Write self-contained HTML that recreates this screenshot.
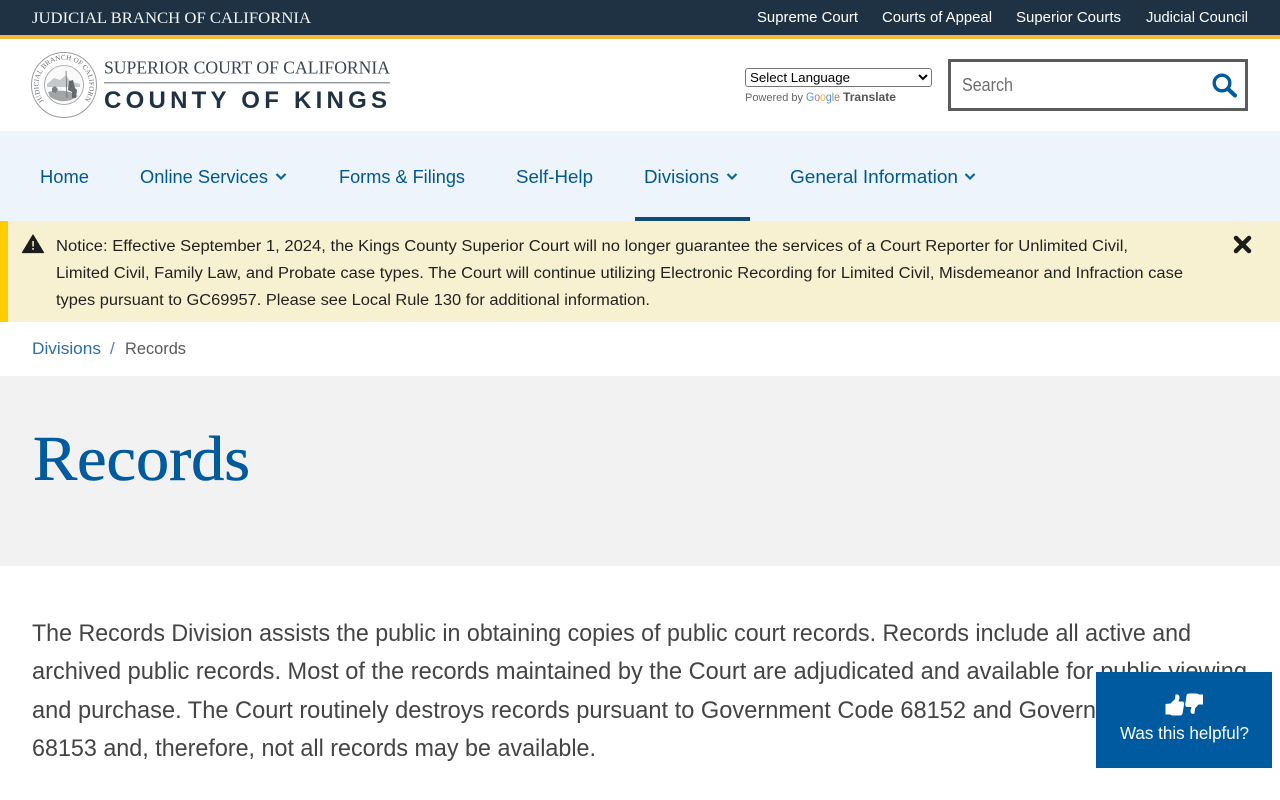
<!DOCTYPE html>
<html lang="en"><head><meta charset="utf-8"><title>Records - Superior Court of California, County of Kings</title>
<style>
html,body{margin:0;padding:0;width:1280px;height:800px;overflow:hidden;background:#fff}
.b{position:absolute}
svg{position:absolute;left:0;top:0}
text{font-family:"Liberation Sans",sans-serif}
.sf{font-family:"Liberation Serif",serif}
select{position:absolute;left:745px;top:68px;width:187px;height:19px;font:13.33px "Liberation Sans",sans-serif;color:#000;background:#fff;border:1px solid #767676;border-radius:3px;padding:0;margin:0}
</style></head><body>
<div class="b" style="left:0;top:0;width:1280px;height:35px;background:#1f3244"></div>
<div class="b" style="left:0;top:35px;width:1280px;height:4px;background:#f0b840"></div>
<div class="b" style="left:0;top:131px;width:1280px;height:90px;background:#edf4fb"></div>
<div class="b" style="left:635px;top:217px;width:115px;height:4px;background:#0f4c75"></div>
<div class="b" style="left:0;top:221px;width:1280px;height:101px;background:#f8f1d1"></div>
<div class="b" style="left:0;top:221px;width:8px;height:101px;background:#ffcc00"></div>
<div class="b" style="left:0;top:376px;width:1280px;height:190px;background:#f2f2f2"></div>
<div class="b" style="left:948px;top:59px;width:294px;height:46px;border:3px solid #5c5c5c;background:#fff"></div>
<select><option>Select Language</option></select>
<svg width="1280" height="800" viewBox="0 0 1280 800">
<defs><path id="ring" d="M44 101 A25.500 25.500 0 1 1 84 101"/></defs>
<text class="sf" x="32" y="23" font-size="16" fill="#f1f3f4" textLength="279" lengthAdjust="spacingAndGlyphs">JUDICIAL BRANCH OF CALIFORNIA</text>
<g font-size="15" fill="#fff">
<text x="757" y="22" textLength="101" lengthAdjust="spacingAndGlyphs">Supreme Court</text>
<text x="882" y="22" textLength="110" lengthAdjust="spacingAndGlyphs">Courts of Appeal</text>
<text x="1016" y="22" textLength="105" lengthAdjust="spacingAndGlyphs">Superior Courts</text>
<text x="1146" y="22" textLength="102" lengthAdjust="spacingAndGlyphs">Judicial Council</text>
</g>
<circle cx="64" cy="85" r="32.500" fill="#fff" stroke="#9a9ea2" stroke-width="1"/>
<circle cx="64" cy="85" r="19.500" fill="#fafafa" stroke="#9a9ea2" stroke-width=".8"/>
<text class="sf" font-size="7" fill="#6a6d70"><textPath href="#ring" textLength="120" lengthAdjust="spacing">JUDICIAL BRANCH OF CALIFORNIA</textPath></text>
<path d="M47 84 L54 78 L60 80 L66 75 L70 81 L80 84 L80 87 L47 87 Z" fill="#c6c9cb"/>
<path d="M48 92 Q58 89 70 92 L78 96 Q64 106 50 97 Z" fill="#a2a4a6"/>
<path d="M66 71 L67 98" stroke="#6a6d70" stroke-width=".8"/>
<path d="M69 81 L73 80 L75 88 L77 90 L76 98 L72 98 L72 92 L68 90 Z" fill="#66696b"/>
<path d="M52 88 l3 -2 l3 3 l-2 4 l-4 -1 Z" fill="#7d8083"/>
<text class="sf" x="104" y="73.500" font-size="18" fill="#3a4550" textLength="286" lengthAdjust="spacingAndGlyphs">SUPERIOR COURT OF CALIFORNIA</text>
<rect x="104" y="82" width="286" height="1.500" fill="#9a9fa3"/>
<text x="104" y="108" font-size="24" font-weight="700" fill="#1f3244" textLength="283" lengthAdjust="spacing">COUNTY OF KINGS</text>
<text x="745" y="101" font-size="11" fill="#666" textLength="58" lengthAdjust="spacingAndGlyphs">Powered by</text>
<text x="806" y="101" font-size="12" textLength="34" lengthAdjust="spacingAndGlyphs"><tspan fill="#5a8df0">G</tspan><tspan fill="#e2675c">o</tspan><tspan fill="#eab93a">o</tspan><tspan fill="#5a8df0">g</tspan><tspan fill="#58a868">l</tspan><tspan fill="#e2675c">e</tspan></text>
<text x="843" y="101" font-size="11.500" font-weight="700" fill="#555" textLength="53" lengthAdjust="spacingAndGlyphs">Translate</text>
<text x="962" y="91" font-size="18" fill="#6e6e6e" textLength="51" lengthAdjust="spacingAndGlyphs">Search</text>
<circle cx="1222" cy="83" r="7.800" fill="none" stroke="#005a9e" stroke-width="3.400"/>
<path d="M1228 89 L1235 95.500" stroke="#005a9e" stroke-width="4.200" stroke-linecap="round"/>
<g font-size="18" fill="#005a8f">
<text x="40" y="183" textLength="49" lengthAdjust="spacingAndGlyphs">Home</text>
<text x="140" y="183" textLength="128" lengthAdjust="spacingAndGlyphs">Online Services</text>
<text x="339" y="183" textLength="126" lengthAdjust="spacingAndGlyphs">Forms &amp; Filings</text>
<text x="516" y="183" textLength="77" lengthAdjust="spacingAndGlyphs">Self-Help</text>
<text x="644" y="183" textLength="75" lengthAdjust="spacingAndGlyphs">Divisions</text>
<text x="790" y="183" textLength="168" lengthAdjust="spacingAndGlyphs">General Information</text>
</g>
<g fill="none" stroke="#0a6a8f" stroke-width="2.200">
<path d="M276.500 174 L281 178.500 L285.500 174"/>
<path d="M727.500 174 L732 178.500 L736.500 174"/>
<path d="M965.500 174 L970 178.500 L974.500 174"/>
</g>
<path d="M33 235 L43.500 252.500 L22.500 252.500 Z" fill="#1c1c1c" stroke="#1c1c1c" stroke-width="1.200" stroke-linejoin="round"/>
<rect x="32.300" y="241" width="1.500" height="5.500" fill="#f8f1d1"/><rect x="32.300" y="248" width="1.500" height="1.800" fill="#f8f1d1"/>
<path d="M1236 238 L1249 251 M1249 238 L1236 251" stroke="#1c1c1c" stroke-width="4.500" stroke-linecap="round"/>
<g font-size="15.500" fill="#222">
<text x="56" y="251" textLength="1072" lengthAdjust="spacingAndGlyphs">Notice: Effective September 1, 2024, the Kings County Superior Court will no longer guarantee the services of a Court Reporter for Unlimited Civil,</text>
<text x="56" y="278" textLength="1127" lengthAdjust="spacingAndGlyphs">Limited Civil, Family Law, and Probate case types. The Court will continue utilizing Electronic Recording for Limited Civil, Misdemeanor and Infraction case</text>
<text x="56" y="305" textLength="594" lengthAdjust="spacingAndGlyphs">types pursuant to GC69957. Please see Local Rule 130 for additional information.</text>
</g>
<g font-size="17">
<text x="32" y="354" fill="#2a6eae" textLength="69" lengthAdjust="spacingAndGlyphs">Divisions</text>
<text x="110" y="354" fill="#5f7f9f">/</text>
<text x="125" y="354" fill="#5a5a5a" textLength="61" lengthAdjust="spacingAndGlyphs">Records</text>
</g>
<text class="sf" x="33" y="480" font-size="64" fill="#005a9e" stroke="#005a9e" stroke-width=".6" textLength="217" lengthAdjust="spacingAndGlyphs">Records</text>
<g font-size="24" fill="#444">
<text x="32" y="641" textLength="1159" lengthAdjust="spacingAndGlyphs">The Records Division assists the public in obtaining copies of public court records. Records include all active and</text>
<text x="32" y="679" textLength="1215" lengthAdjust="spacingAndGlyphs">archived public records. Most of the records maintained by the Court are adjudicated and available for public viewing</text>
<text x="32" y="718" textLength="1064" lengthAdjust="spacingAndGlyphs">and purchase. The Court routinely destroys records pursuant to Government Code 68152 and Govern</text>
<text x="1096" y="718">ment Code</text>
<text x="32" y="756" textLength="564" lengthAdjust="spacingAndGlyphs">68153 and, therefore, not all records may be available.</text>
</g>
<rect x="1096" y="672" width="176" height="96" fill="#005a9f"/>
<path d="M1165.500 704 L1170.500 703.500 L1175 699 L1175.500 694.500 Q1179.500 693.500 1179.500 698 L1178.500 701.500 H1183 Q1184.500 702.500 1184 705 L1182.500 713.500 Q1182 715.500 1180 715.500 H1172 L1170 714.500 H1165.500 Z" fill="#fff"/>
<path d="M1203 704.500 L1198.500 704.500 L1195 708.500 L1194.500 713.500 Q1190.500 715 1190.500 710.500 L1191.500 707 H1186.500 Q1184.800 706 1185.300 703.500 L1186.500 695.500 Q1187 693.500 1189 693.500 H1197 L1199 694.500 H1203 Z" fill="#fff"/>
<text x="1120" y="739" font-size="17.500" fill="#fff" textLength="129" lengthAdjust="spacingAndGlyphs">Was this helpful?</text>
</svg>
</body></html>
